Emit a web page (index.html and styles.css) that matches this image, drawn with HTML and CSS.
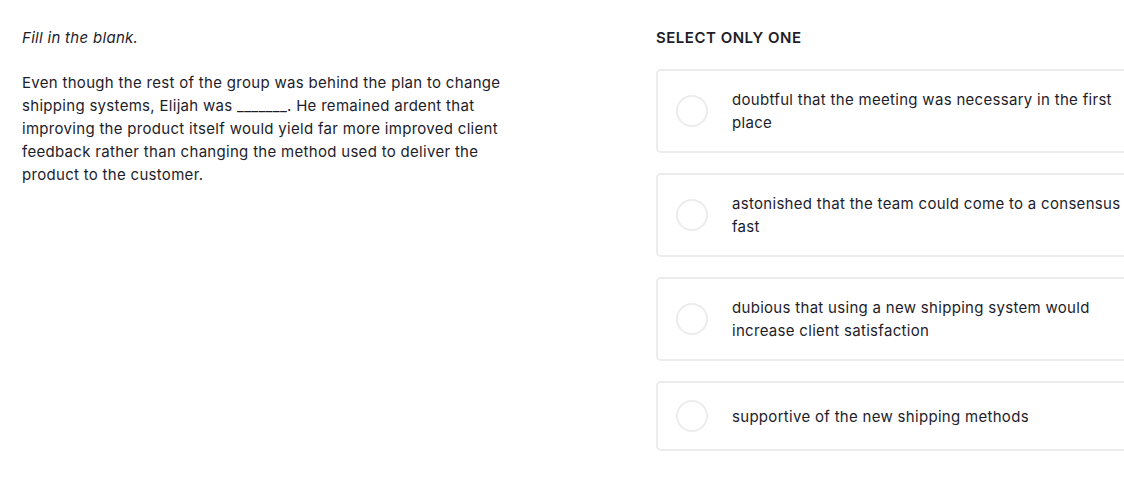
FILE: index.html
```html
<!DOCTYPE html>
<html lang="en">
<head>
<meta charset="utf-8">
<title>Fill in the blank</title>
<link rel="stylesheet" href="styles.css">
</head>
<body>
<main class="page">
  <section class="prompt">
    <p class="instruction">Fill in the blank.</p>
    <p class="passage">Even though the rest of the group was behind the plan to change shipping systems, Elijah was _______. He remained ardent that improving the product itself would yield far more improved client feedback rather than changing the method used to deliver the product to the customer.</p>
  </section>
  <section class="answers">
    <h2 class="answers-title">SELECT ONLY ONE</h2>
    <ul class="options">
      <li class="option"><span class="radio"></span><span class="option-text">doubtful that the meeting was necessary in the first place</span></li>
      <li class="option"><span class="radio"></span><span class="option-text">astonished that the team could come to a consensus fast</span></li>
      <li class="option"><span class="radio"></span><span class="option-text">dubious that using a new shipping system would increase client satisfaction</span></li>
      <li class="option"><span class="radio"></span><span class="option-text">supportive of the new shipping methods</span></li>
    </ul>
  </section>
</main>
</body>
</html>
```

FILE: styles.css
```css
html, body {
  margin: 0;
  padding: 0;
  background: #ffffff;
  overflow: hidden;
}

body {
  font-family: "Inter", "Liberation Sans", sans-serif;
  font-size: 15px;
  line-height: 23px;
  letter-spacing: 0.3px;
  color: #1d1d2b;
}

.page {
  display: flex;
  align-items: flex-start;
  padding: 26px 0 0 22px;
  width: 1300px;
}

.prompt {
  width: 492px;
  flex: none;
}

.instruction {
  margin: 0;
  font-style: italic;
}

.passage {
  margin: 22px 0 0;
}

.answers {
  margin-left: 142px;
  width: 500px;
  flex: none;
}

.answers-title {
  margin: 0;
  font-size: 15px;
  line-height: 23px;
  font-weight: 600;
  letter-spacing: 0.5px;
}

.options {
  list-style: none;
  margin: 20px 0 0;
  padding: 0;
  display: flex;
  flex-direction: column;
  gap: 20px;
}

.option {
  display: flex;
  align-items: center;
  gap: 24px;
  padding: 17px 20px 17px 18px;
  border: 2px solid #ececec;
  border-radius: 5px;
}

.radio {
  flex: none;
  width: 32px;
  height: 32px;
  box-sizing: border-box;
  border: 2px solid #ececec;
  border-radius: 50%;
}

.option-text {
  flex: 1;
}
```
